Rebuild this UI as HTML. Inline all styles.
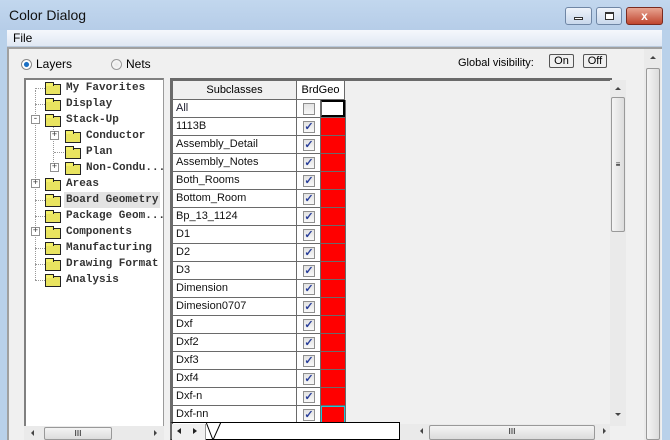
<!DOCTYPE html>
<html><head><meta charset="utf-8"><style>
*{margin:0;padding:0;box-sizing:border-box}
body{width:670px;height:440px;overflow:hidden;position:relative;background:#b9d1ea;font-family:"Liberation Sans",sans-serif;font-size:11px}
.a{position:absolute}
.title{left:0;top:0;width:670px;height:30px;background:linear-gradient(#c2d7ee,#b6cde8)}
.tbtn{top:7px;height:18px;border:1px solid #6f86a5;border-radius:3px;background:linear-gradient(#eef3fa,#c9d8ec)}
.menu{left:7px;top:30px;width:655px;height:17px;background:linear-gradient(#f5f8fc,#e0e8f3);border-bottom:1px solid #b9c9dc;font-size:12px;padding:1px 6px}
.body{left:7px;top:47px;width:655px;height:393px;background:#f0f0f0;border-left:2px solid #a0a0a0;border-top:2px solid #a0a0a0}
.tree{left:24px;top:78px;width:140px;height:350px;background:#fff;border:1px solid #9a9a9a;border-top:2px solid #808080;border-left:2px solid #808080}
.ti{position:absolute;font-family:"Liberation Mono","WenQuanYi Zen Hei",monospace;font-size:11px;font-weight:bold;color:#333;height:16px;line-height:16px;white-space:nowrap}
.fd{position:absolute;width:16px;height:11px;background:#f4f06a;border:1px solid #222;background-image:radial-gradient(#c8c040 30%,transparent 31%);background-size:2px 2px}
.fd:before{content:"";position:absolute;left:-1px;top:-3px;width:7px;height:3px;border:1px solid #222;border-bottom:none;background:#f4f06a}
.pm{position:absolute;width:9px;height:9px;border:1px solid #919191;background:#fff;font-size:9px;line-height:7px;text-align:center;color:#333;font-family:"Liberation Mono",monospace}
.dl{position:absolute;border-top:1px dotted #999}
.dv{position:absolute;border-left:1px dotted #999}
.grid{left:170px;top:78px;width:442px;height:346px;border-left:3px solid #6a6a6a;border-top:3px solid #6a6a6a;background:#f0f0f0}
.row{position:absolute;left:0;width:173px;height:18px;border-bottom:1px solid #6a6a6a;background:#6a6a6a}
.c1{position:absolute;left:0;width:124px;height:17px;background:#fff;padding:2px 3px;font-size:11px;border-right:1px solid #6a6a6a;color:#111}
.c2{position:absolute;left:124px;width:24px;height:17px;background:#fff;border-right:1px solid #6a6a6a}
.c3{position:absolute;left:148px;width:24px;height:17px;background:#f00}
.cb{position:absolute;left:6px;top:3px;width:12px;height:12px;border:1px solid #8f8f8f;background:linear-gradient(#e3e3e3,#f8f8f8);color:#2a3f9a;font-size:11px;line-height:11px;text-align:center;font-weight:bold}
.sb{background:#eaeaea}
.thumb{position:absolute;border:1px solid #999;border-radius:2px;background:linear-gradient(90deg,#f4f4f4,#dcdcdc)}
.thumbh{position:absolute;border:1px solid #999;border-radius:2px;background:linear-gradient(#f4f4f4,#dcdcdc)}
.btn{top:54px;height:14px;border:1px solid #555;border-radius:2px;background:#f0f0f0;font-size:11px;text-align:center;line-height:12px}
</style></head><body>
<div class="a title"></div>
<div class="a" style="left:9px;top:7px;font-size:14px;color:#111">Color Dialog</div>
<div class="a tbtn" style="left:565px;width:27px"><div class="a" style="left:8px;top:9px;width:9px;height:3px;border:1px solid #333;background:#fff"></div></div>
<div class="a tbtn" style="left:596px;width:26px"><div class="a" style="left:8px;top:4px;width:9px;height:8px;border:1px solid #333;border-top:2px solid #333;background:#fff"></div></div>
<div class="a tbtn" style="left:626px;width:37px;background:linear-gradient(#e8a592,#c0462f);border-color:#7a2b20;color:#fff;font-weight:bold;text-align:center;font-size:12px;line-height:16px">x</div>
<div class="a menu">File</div>
<div class="a body"></div>
<div class="a" style="left:21px;top:59px;width:11px;height:11px;border-radius:50%;border:1px solid #888;background:radial-gradient(#1a6fc4 35%,#fff 45%)"></div>
<div class="a" style="left:36px;top:57px;font-size:12px">Layers</div>
<div class="a" style="left:111px;top:59px;width:11px;height:11px;border-radius:50%;border:1px solid #999;background:radial-gradient(#e8e8e8,#fff)"></div>
<div class="a" style="left:126px;top:57px;font-size:12px">Nets</div>
<div class="a" style="left:458px;top:57px;font-size:11px">Global visibility:</div>
<div class="a btn" style="left:549px;width:25px">On</div>
<div class="a btn" style="left:583px;width:24px">Off</div>
<div class="a sb" style="left:644px;top:49px;width:17px;height:391px"></div>
<div class="a" style="left:650px;top:56px;border:3px solid transparent;border-bottom:3px solid #444;border-top:none"></div>
<div class="a thumb" style="left:646px;top:68px;width:14px;height:372px"></div>
<div class="a tree">
<div class="dv" style="left:9px;top:10px;height:190px"></div>
<div class="dv" style="left:27px;top:34px;height:48px"></div>
</div>
<div class="a" style="left:24px;top:78px;width:140px;height:350px">
<div class="dl" style="left:11px;top:10px;width:10px"></div><div class="fd" style="left:21px;top:6px"></div><div class="ti" style="left:42px;top:2px">My Favorites</div>
<div class="dl" style="left:11px;top:26px;width:10px"></div><div class="fd" style="left:21px;top:22px"></div><div class="ti" style="left:42px;top:18px">Display</div>
<div class="pm" style="left:7px;top:37px">-</div><div class="fd" style="left:21px;top:38px"></div><div class="ti" style="left:42px;top:34px">Stack-Up</div>
<div class="pm" style="left:26px;top:53px">+</div><div class="fd" style="left:41px;top:54px"></div><div class="ti" style="left:62px;top:50px">Conductor</div>
<div class="dl" style="left:30px;top:74px;width:10px"></div><div class="fd" style="left:41px;top:70px"></div><div class="ti" style="left:62px;top:66px">Plan</div>
<div class="pm" style="left:26px;top:85px">+</div><div class="fd" style="left:41px;top:86px"></div><div class="ti" style="left:62px;top:82px">Non-Condu...</div>
<div class="pm" style="left:7px;top:101px">+</div><div class="fd" style="left:21px;top:102px"></div><div class="ti" style="left:42px;top:98px">Areas</div>
<div class="dl" style="left:11px;top:122px;width:10px"></div><div class="fd" style="left:21px;top:118px"></div><div class="ti" style="left:40px;top:114px;background:#e3e3e3;padding:0 2px">Board Geometry</div>
<div class="dl" style="left:11px;top:138px;width:10px"></div><div class="fd" style="left:21px;top:134px"></div><div class="ti" style="left:42px;top:130px">Package Geom...</div>
<div class="pm" style="left:7px;top:149px">+</div><div class="fd" style="left:21px;top:150px"></div><div class="ti" style="left:42px;top:146px">Components</div>
<div class="dl" style="left:11px;top:170px;width:10px"></div><div class="fd" style="left:21px;top:166px"></div><div class="ti" style="left:42px;top:162px">Manufacturing</div>
<div class="dl" style="left:11px;top:186px;width:10px"></div><div class="fd" style="left:21px;top:182px"></div><div class="ti" style="left:42px;top:178px">Drawing Format</div>
<div class="dl" style="left:11px;top:202px;width:10px"></div><div class="fd" style="left:21px;top:198px"></div><div class="ti" style="left:42px;top:194px">Analysis</div>
</div>
<div class="a sb" style="left:24px;top:426px;width:140px;height:14px"></div>
<div class="a" style="left:31px;top:430px;border:3px solid transparent;border-right:3px solid #444;border-left:none"></div>
<div class="a thumbh" style="left:44px;top:427px;width:68px;height:13px;text-align:center;font-size:8px;line-height:11px">III</div>
<div class="a" style="left:154px;top:430px;border:3px solid transparent;border-left:3px solid #444;border-right:none"></div>
<div class="a grid">
<div class="a" style="left:0;top:0;width:124px;height:19px;background:#f0f0f0;border-right:1px solid #6a6a6a;border-bottom:1px solid #6a6a6a;text-align:center;line-height:18px;font-size:11px">Subclasses</div>
<div class="a" style="left:124px;top:0;width:48px;height:19px;background:#fff;border-bottom:1px solid #6a6a6a;border-right:1px solid #6a6a6a;text-align:center;line-height:18px;font-size:11px">BrdGeo</div>
<div class="row" style="top:19px"><div class="c1" style="color:#223">All</div><div class="c2"><div class="cb"></div></div><div class="c3" style="background:#fff;border:2px solid #000;border-left:1px solid #666"></div></div>
<div class="row" style="top:37px"><div class="c1">1113B</div><div class="c2"><div class="cb">✓</div></div><div class="c3"></div></div>
<div class="row" style="top:55px"><div class="c1">Assembly_Detail</div><div class="c2"><div class="cb">✓</div></div><div class="c3"></div></div>
<div class="row" style="top:73px"><div class="c1">Assembly_Notes</div><div class="c2"><div class="cb">✓</div></div><div class="c3"></div></div>
<div class="row" style="top:91px"><div class="c1">Both_Rooms</div><div class="c2"><div class="cb">✓</div></div><div class="c3"></div></div>
<div class="row" style="top:109px"><div class="c1">Bottom_Room</div><div class="c2"><div class="cb">✓</div></div><div class="c3"></div></div>
<div class="row" style="top:127px"><div class="c1">Bp_13_1124</div><div class="c2"><div class="cb">✓</div></div><div class="c3"></div></div>
<div class="row" style="top:145px"><div class="c1">D1</div><div class="c2"><div class="cb">✓</div></div><div class="c3"></div></div>
<div class="row" style="top:163px"><div class="c1">D2</div><div class="c2"><div class="cb">✓</div></div><div class="c3"></div></div>
<div class="row" style="top:181px"><div class="c1">D3</div><div class="c2"><div class="cb">✓</div></div><div class="c3"></div></div>
<div class="row" style="top:199px"><div class="c1">Dimension</div><div class="c2"><div class="cb">✓</div></div><div class="c3"></div></div>
<div class="row" style="top:217px"><div class="c1">Dimesion0707</div><div class="c2"><div class="cb">✓</div></div><div class="c3"></div></div>
<div class="row" style="top:235px"><div class="c1">Dxf</div><div class="c2"><div class="cb">✓</div></div><div class="c3"></div></div>
<div class="row" style="top:253px"><div class="c1">Dxf2</div><div class="c2"><div class="cb">✓</div></div><div class="c3"></div></div>
<div class="row" style="top:271px"><div class="c1">Dxf3</div><div class="c2"><div class="cb">✓</div></div><div class="c3"></div></div>
<div class="row" style="top:289px"><div class="c1">Dxf4</div><div class="c2"><div class="cb">✓</div></div><div class="c3"></div></div>
<div class="row" style="top:307px"><div class="c1">Dxf-n</div><div class="c2"><div class="cb">✓</div></div><div class="c3"></div></div>
<div class="row" style="top:325px;border-bottom:none"><div class="c1">Dxf-nn</div><div class="c2"><div class="cb">✓</div></div><div class="c3" style="border:1px solid #1cc8d8"></div></div>
</div>
<div class="a sb" style="left:610px;top:80px;width:16px;height:346px"></div>
<div class="a" style="left:615px;top:87px;border:3px solid transparent;border-bottom:3px solid #444;border-top:none"></div>
<div class="a thumb" style="left:611px;top:97px;width:14px;height:135px;text-align:center;font-size:8px;line-height:10px;padding-top:62px">≡</div>
<div class="a" style="left:615px;top:413px;border:3px solid transparent;border-top:3px solid #444;border-bottom:none"></div>
<div class="a" style="left:170px;top:422px;width:230px;height:18px;background:#fff;border:1px solid #000;border-left:3px solid #6a6a6a"></div>
<div class="a" style="left:172px;top:424px;width:34px;height:16px;background:#f0f0f0;border-right:1px solid #999"></div>
<div class="a" style="left:177px;top:428px;border:3px solid transparent;border-right:4px solid #222;border-left:none"></div>
<div class="a" style="left:193px;top:428px;border:3px solid transparent;border-left:4px solid #222;border-right:none"></div>
<svg class="a" style="left:205px;top:422px" width="30" height="18"><path d="M1 0 L8 18 M8 18 L16 0" stroke="#000" fill="none"/></svg>
<div class="a sb" style="left:400px;top:424px;width:210px;height:16px"></div>
<div class="a" style="left:420px;top:428px;border:3px solid transparent;border-right:3px solid #444;border-left:none"></div>
<div class="a thumbh" style="left:429px;top:425px;width:166px;height:15px;text-align:center;font-size:8px;line-height:12px">III</div>
<div class="a" style="left:603px;top:428px;border:3px solid transparent;border-left:3px solid #444;border-right:none"></div>
<div class="a" style="left:662px;top:47px;width:8px;height:393px;background:#b9d1ea"></div>
</body></html>
